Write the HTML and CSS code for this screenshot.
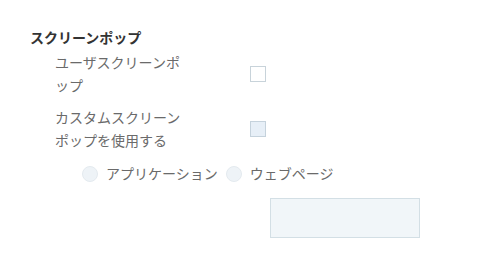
FILE: index.html
```
<!DOCTYPE html>
<html lang="ja">
<head>
<meta charset="utf-8">
<link rel="stylesheet" href="styles.css">
</head>
<body>
<div class="panel">
  <div class="title">スクリーンポップ</div>
  <div class="row row-first">
    <div class="label">ユーザスクリーンポップ</div>
    <span class="checkbox"></span>
  </div>
  <div class="row row-second">
    <div class="label">カスタムスクリーンポップを使用する</div>
    <span class="checkbox checkbox-disabled"></span>
  </div>
  <div class="radios">
    <span class="radio"></span>
    <span class="radio-label">アプリケーション</span>
    <span class="radio"></span>
    <span class="radio-label">ウェブページ</span>
  </div>
  <div class="input-wrap">
    <div class="input-box"></div>
  </div>
</div>
</body>
</html>
```
FILE: styles.css
```
html, body {
  margin: 0;
  padding: 0;
  background: #ffffff;
}
body {
  font-family: "Noto Sans CJK JP", "Noto Sans", sans-serif;
  font-size: 14px;
  color: #6a6a6a;
}
.panel {
  padding: 27px 0 0 30px;
}
.title {
  font-weight: bold;
  color: #333333;
  line-height: 20px;
}
.row {
  display: flex;
  align-items: center;
  padding-left: 25px;
}
.row-first {
  margin-top: 4px;
}
.row-second {
  margin-top: 9px;
}
.label {
  width: 130px;
  line-height: 23px;
}
.checkbox {
  width: 14px;
  height: 14px;
  margin-left: 65px;
  border: 1px solid #c8d3da;
  background: #ffffff;
}
.checkbox-disabled {
  background: #e7eff7;
  border-color: #c5d2dc;
}
.radios {
  display: flex;
  align-items: center;
  margin-top: 10px;
  padding-left: 52px;
  line-height: 23px;
}
.radio {
  width: 14px;
  height: 14px;
  border-radius: 50%;
  border: 1px solid #e4eaef;
  background: #eef3f7;
  margin-right: 8px;
}
.radio-label {
  margin-right: 8px;
}
.input-wrap {
  margin-top: 13px;
  padding-left: 240px;
}
.input-box {
  width: 148px;
  height: 38px;
  border: 1px solid #d3dfe5;
  background: #f1f6f9;
}
```
